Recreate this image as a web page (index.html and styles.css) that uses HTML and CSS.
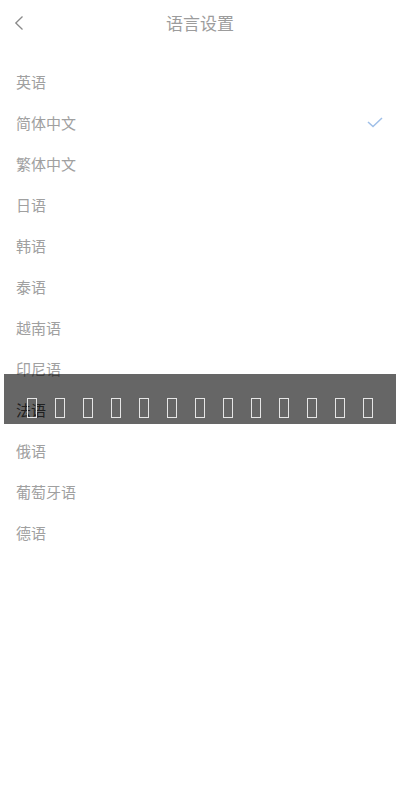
FILE: index.html
```html
<!DOCTYPE html>
<html lang="zh-CN">
<head>
<meta charset="utf-8">
<title>语言设置</title>
<link rel="stylesheet" href="styles.css">
</head>
<body>
<div class="page">
  <header class="nav">
    <span class="back">
      <svg width="10" height="16" viewBox="0 0 10 16"><path d="M8.5 1.5 L1.8 8 L8.5 14.5" fill="none" stroke="#8a8a8a" stroke-width="1.3"/></svg>
    </span>
    <h1 class="title">语言设置</h1>
  </header>
  <ul class="list">
    <li class="item">英语</li>
    <li class="item">简体中文<svg class="check" width="16" height="11" viewBox="0 0 16 11"><path d="M1 5 L6 9.5 L15 1" fill="none" stroke="#9fbfe8" stroke-width="1.5"/></svg></li>
    <li class="item">繁体中文</li>
    <li class="item">日语</li>
    <li class="item">韩语</li>
    <li class="item">泰语</li>
    <li class="item">越南语</li>
    <li class="item">印尼语</li>
    <li class="item item-pressed">法语</li>
    <li class="item">俄语</li>
    <li class="item">葡萄牙语</li>
    <li class="item">德语</li>
  </ul>
  <div class="toast">
    <span class="tofu"></span><span class="tofu"></span><span class="tofu"></span><span class="tofu"></span><span class="tofu"></span><span class="tofu"></span><span class="tofu"></span><span class="tofu"></span><span class="tofu"></span><span class="tofu"></span><span class="tofu"></span><span class="tofu"></span><span class="tofu"></span>
  </div>
</div>
</body>
</html>
```
FILE: styles.css
```css
html, body {
  margin: 0;
  padding: 0;
  background: #fff;
}
body {
  font-family: "Noto Sans CJK SC", "Noto Sans", sans-serif;
  width: 400px;
  height: 800px;
  overflow: hidden;
}
.page {
  position: relative;
  width: 400px;
  height: 800px;
}
.nav {
  height: 44px;
  display: flex;
  align-items: center;
  justify-content: center;
  position: relative;
}
.back {
  position: absolute;
  left: 14px;
  top: 15px;
  width: 10px;
  height: 16px;
  display: flex;
}
.title {
  margin: 0;
  font-size: 17px;
  font-weight: normal;
  color: #9c9c9c;
  letter-spacing: 0;
}
.list {
  list-style: none;
  margin: 0;
  padding: 17px 0 0;
}
.item {
  height: 41px;
  display: flex;
  align-items: center;
  justify-content: space-between;
  padding: 0 17px 0 16px;
  font-size: 15px;
  color: #a0a0a0;
}
.item-pressed {
  color: #505050;
}
.check {
  display: block;
}
.toast {
  position: absolute;
  left: 4px;
  top: 374px;
  width: 392px;
  height: 50px;
  background: rgba(0, 0, 0, 0.6);
  display: flex;
  align-items: flex-start;
  padding: 24px 0 0 23px;
  box-sizing: border-box;
  gap: 18px;
}
.tofu {
  width: 10px;
  height: 20px;
  box-sizing: border-box;
  border: 1.5px solid #e6e6e6;
  flex: none;
}
```
